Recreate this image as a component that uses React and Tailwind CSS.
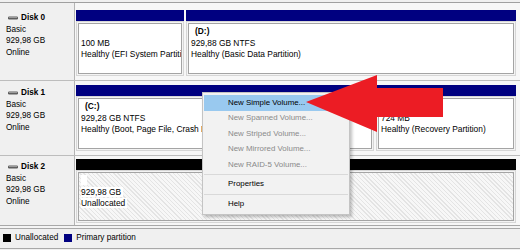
import React from 'react';

function DiskIcon() {
  return (
    <svg width="10" height="4" viewBox="0 0 10 4" className="shrink-0">
      <rect x="0" y="0.5" width="10" height="3" rx="1.2" fill="#5e5e5e" />
      <rect x="1" y="1" width="8" height="1" fill="#9a9a9a" />
    </svg>
  );
}

function DiskLabel({ name, pt }) {
  return (
    <div className={`w-[75px] shrink-0 border-r border-[#b4b4b4] bg-[#f0f0f0] pl-[6px] text-[8.2px] leading-[11.5px] ${pt}`}>
      <div className="flex items-center gap-[3px] pl-[2px] font-bold">
        <DiskIcon />
        <span>{name}</span>
      </div>
      <div>Basic</div>
      <div>929,98 GB</div>
      <div>Online</div>
    </div>
  );
}

function Partition({ w, h, bar, label, lines, hatched }) {
  return (
    <div className={`flex flex-col ${w}`}>
      <div className={`h-[11px] ${bar}`} />
      <div className={`border border-[#d6d6d6] bg-[#f4f4f4] p-[1px] ${h}`}>
        <div
          className={`h-full border border-[#a4a4a4] px-[2px] pt-[2px] text-[8.4px] leading-[11.5px] overflow-hidden whitespace-nowrap ${
            hatched
              ? 'bg-[repeating-linear-gradient(45deg,#e4e4e4_0px,#e4e4e4_1px,#f7f7f7_1px,#f7f7f7_3px)]'
              : 'bg-white'
          }`}
        >
          {label ? (
            <div className="pl-[4px] font-bold">{label}</div>
          ) : hatched ? (
            <div><span className="bg-white pl-[6px]" /></div>
          ) : (
            <div>&nbsp;</div>
          )}
          {lines.map((t) => (
            <div key={t}>
              <span className={hatched ? 'bg-white pr-[2px]' : ''}>{t}</span>
            </div>
          ))}
        </div>
      </div>
    </div>
  );
}

function MenuItem({ children, active, disabled }) {
  return (
    <div
      className={`flex h-[15.5px] items-center pl-[24px] text-[7.9px] ${
        active ? 'bg-[#99c9ef]' : ''
      } ${disabled ? 'text-[#8a8a8a]' : 'text-black'}`}
    >
      {children}
    </div>
  );
}

function Sep() {
  return (
    <div className="flex h-[4px] items-center">
      <div className="h-px w-full bg-[#d9d9d9]" />
    </div>
  );
}

export default function App() {
  return (
    <div className="relative h-[250px] w-[520px] overflow-hidden bg-[#f0f0f0] font-['Liberation_Sans',Arial,sans-serif] text-black">
      <div className="h-[2px]" />
      <div className="border-t border-[#a0a0a0]" />

      <div className="flex h-[78px] border-b border-[#bdbdbd]">
        <DiskLabel name="Disk 0" pt="pt-[9px]" />
        <div className="flex flex-1 gap-[2px] bg-[#f7f7f7] pl-[1px] pr-[3px] pt-[7px]">
          <Partition
            w="w-[108px]"
            h="h-[55px]"
            bar="bg-[#000080]"
            lines={['100 MB', 'Healthy (EFI System Partiti']}
          />
          <Partition
            w="w-[330px]"
            h="h-[55px]"
            bar="bg-[#000080]"
            label="(D:)"
            lines={['929,88 GB NTFS', 'Healthy (Basic Data Partition)']}
          />
        </div>
      </div>

      <div className="flex h-[75px] border-b border-[#bdbdbd]">
        <DiskLabel name="Disk 1" pt="pt-[6px]" />
        <div className="flex flex-1 gap-[2px] bg-[#f7f7f7] pl-[1px] pr-[3px] pt-[4px]">
          <Partition
            w="w-[298px]"
            h="h-[55px]"
            bar="bg-[#000080]"
            label="(C:)"
            lines={['929,28 GB NTFS', 'Healthy (Boot, Page File, Crash D']}
          />
          <Partition
            w="w-[140px]"
            h="h-[55px]"
            bar="bg-[#000080]"
            lines={['724 MB', 'Healthy (Recovery Partition)']}
          />
        </div>
      </div>

      <div className="flex h-[69px]">
        <DiskLabel name="Disk 2" pt="pt-[5px]" />
        <div className="flex flex-1 bg-[#f7f7f7] pl-[1px] pr-[3px] pt-[3px]">
          <Partition
            w="w-[440px]"
            h="h-[53px]"
            bar="bg-black"
            hatched
            lines={['929,98 GB', 'Unallocated']}
          />
        </div>
      </div>

      <div className="h-[4px] border-y border-[#a8a8a8] bg-[#f4f4f4]" />

      <div className="flex h-[20px] items-center border-b border-[#a8a8a8] pb-[1px] pl-[3px] text-[8.2px]">
        <span className="mr-[4px] h-[8px] w-[8px] bg-black" />
        <span className="mr-[6px]">Unallocated</span>
        <span className="mr-[4px] h-[8px] w-[8px] bg-[#000080]" />
        <span>Primary partition</span>
      </div>

      <div className="absolute left-[202px] top-[92px] h-[123px] w-[148px] border border-[#c4c4c4] bg-[#f2f2f2] px-px pt-[2px] shadow-[2px_2px_3px_rgba(0,0,0,0.25)]">
        <MenuItem active>New Simple Volume...</MenuItem>
        <MenuItem disabled>New Spanned Volume...</MenuItem>
        <MenuItem disabled>New Striped Volume...</MenuItem>
        <MenuItem disabled>New Mirrored Volume...</MenuItem>
        <MenuItem disabled>New RAID-5 Volume...</MenuItem>
        <Sep />
        <MenuItem>Properties</MenuItem>
        <Sep />
        <MenuItem>Help</MenuItem>
      </div>

      <svg
        className="pointer-events-none absolute left-0 top-0"
        width="520"
        height="250"
        viewBox="0 0 520 250"
      >
        <polygon
          points="306,102 377,75 377,88 443,88 443,117 377,117 377,132"
          fill="#ec1c24"
        />
      </svg>
    </div>
  );
}
